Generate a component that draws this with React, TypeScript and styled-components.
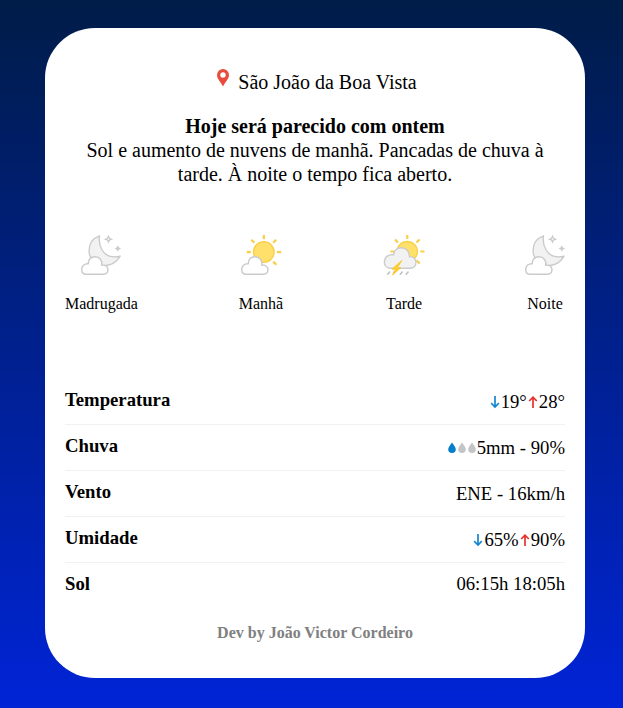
import React from 'react';
import styled, { createGlobalStyle } from 'styled-components';

const GlobalStyle = createGlobalStyle`
  * { box-sizing: border-box; margin: 0; padding: 0; }
  body {
    font-family: "Liberation Serif", "Times New Roman", serif;
    color: #000;
  }
`;

const Page = styled.div`
  height: 708px;
  padding: 28px 0 0 45px;
  background: linear-gradient(#001c48, #0024d6);
`;

const Card = styled.main`
  display: flex;
  flex-direction: column;
  width: 540px;
  height: 650px;
  padding: 40px 20px 0;
  border-radius: 50px;
  background: #fff;
`;

const City = styled.div`
  display: flex;
  justify-content: center;
  height: 28px;
  padding-left: 4px;
  font-size: 20px;
  line-height: 28px;

  svg { margin: 1px 9px 0 0; }
`;

const Summary = styled.section`
  width: 480px;
  height: 72px;
  margin: 18px auto 0;
  font-size: 20px;
  line-height: 24px;
  text-align: center;
`;

const SummaryTitle = styled.h1`
  font-size: 20px;
  line-height: 24px;
`;

const Periods = styled.div`
  display: flex;
  justify-content: space-between;
  height: 81px;
  margin-top: 49px;
`;

const Period = styled.div`
  display: flex;
  flex-direction: column;
  align-items: center;
  font-size: 16px;
  line-height: 18px;

  svg { display: block; margin-bottom: 18px; overflow: visible; }
`;

const Details = styled.dl`
  margin-top: 63px;
`;

const Row = styled.div`
  display: flex;
  justify-content: space-between;
  height: 46px;
  font-size: 18.72px;
  line-height: 22px;
  border-bottom: 1px solid #f1f1f1;

  &:last-child { border-color: transparent; }
`;

const Label = styled.dt`
  padding-top: 10px;
  font-weight: bold;
`;

const Value = styled.dd<{ $top: number }>`
  display: flex;
  padding-top: ${({ $top }) => $top}px;

  svg { display: block; margin-top: 4px; }
`;

const Credit = styled.footer`
  margin-top: 15px;
  font-size: 16px;
  font-weight: bold;
  line-height: 18px;
  text-align: center;
  color: #808080;
`;

const Pin = () => (
  <svg width="12" height="18" viewBox="0 0 12 18">
    <path fill="#e74c3c" fillRule="evenodd" d="M6 0a6 6 0 0 0-6 6c0 4.2 4.1 7 6 11.6C7.900 13 12 10.200 12 6a6 6 0 0 0-6-6zm0 3.300a2.700 2.700 0 1 1 0 5.400 2.700 2.700 0 0 1 0-5.400z" />
  </svg>
);

const SmallCloud = () => (
  <path
    d="M5.200 39.300H22.600A4.700 4.700 0 0 0 27 34.800C27 31.600 24 29.400 20.800 30.400C21.600 25.500 18.500 21.800 14 21.800C9.700 21.800 7 24.900 7.300 28.700C3.200 28.400 .7 31 .7 34.500C.7 37.300 2.500 39.300 5.200 39.300z"
    fill="#fff" stroke="#cbcbcb" strokeWidth="1.400" strokeLinejoin="round"
  />
);

const Night = () => (
  <svg width="40" height="42" viewBox="0 0 40 42">
    <path d="M18.500 .8C11 3.500 7.800 9.500 8.100 16.500c.5 8.500 6.700 14.200 14.500 14.200 7.500 0 13.200-3.900 16.500-9.500-7.500 1.700-14.400-.2-18-6.200C18.400 10.300 17.700 5.500 18.500 .8z" fill="#f2f2f2" stroke="#cbcbcb" strokeWidth="1.400" strokeLinejoin="round" />
    <path d="M27.500 1.200l.9 2.100 2.100.9-2.100.9-.9 2.100-.9-2.100-2.100-.9 2.100-.9zM36.800 11.700l.6 1.200 1.200.6-1.200.6-.6 1.200-.6-1.200-1.200-.6 1.200-.6z" fill="#fff" stroke="#cbcbcb" strokeWidth="1.300" />
    <SmallCloud />
  </svg>
);

const Sun = () => (
  <>
    <circle cx="22.800" cy="17" r="10.300" fill="#ffe06a" stroke="#f8cf45" strokeWidth="1.300" />
    <path d="M22.800 0v4.200M10.400 4.700l3 3M35.200 4.700l-3 3M5.800 17.200h4M36 17.200h4.200M32.200 26.600l3.200 3.200" fill="none" stroke="#f8cf45" strokeWidth="2.200" />
  </>
);

const Morning = () => (
  <svg width="40" height="42" viewBox="0 0 40 42">
    <Sun />
    <SmallCloud />
  </svg>
);

const Storm = () => (
  <svg width="40" height="42" viewBox="0 0 40 42">
    <g transform="translate(.7 0) scale(.99 .96)"><Sun /></g>
    <path d="M7 33.200h19c4 0 6-2.700 6-5.800 0-3.600-2.900-6-6.600-5.700C25.400 16.100 21.800 12.700 17.200 12.700c-4.700 0-7.400 3.400-7.700 7.200C4.200 19.200.3 22.200.3 26.900c0 3.700 2.700 6.300 6.700 6.300z" fill="#f2f2f2" stroke="#cbcbcb" strokeWidth="1.400" />
    <path d="M6 36.500l-2.700 3.200M10.500 36.500l-1.200 1.300M18.600 36.500l-2.700 3.200M24.500 36.500l-2.700 3.200" stroke="#c2c2c2" strokeWidth="1.600" />
    <path d="M17.800 25.500L8 34.200h3.800L8.500 40l8.200-7.200h-3.400z" fill="#ffd02c" stroke="#f9c836" strokeWidth="1" />
  </svg>
);

const Arrow = ({ up = false }: { up?: boolean }) => (
  <svg width="12" height="14" viewBox="0 0 12 14" fill="none" stroke={up ? '#e5322d' : '#1686cf'} strokeWidth="1.700">
    {up ? <path d="M6 13V2.200M2.200 6L6 2.200 9.800 6" /> : <path d="M6 1v11M2.200 8.200L6 12l3.800-3.800" />}
  </svg>
);

const Drop = ({ filled = false }: { filled?: boolean }) => (
  <svg width="10" height="14" viewBox="0 0 10 14">
    <path fill={filled ? '#057ecb' : '#c2c4c6'} d="M5 1.500C3.500 4 1.200 6.200 1.200 8.300a3.800 3.800 0 0 0 7.600 0C8.800 6.200 6.500 4 5 1.500z" />
  </svg>
);

const periods = [
  { name: 'Madrugada', Icon: Night },
  { name: 'Manhã', Icon: Morning },
  { name: 'Tarde', Icon: Storm },
  { name: 'Noite', Icon: Night },
];

const details = [
  { label: 'Temperatura', top: 12, value: <><Arrow />19°<Arrow up />28°</> },
  { label: 'Chuva', top: 12, value: <><Drop filled /><Drop /><Drop />5mm - 90%</> },
  { label: 'Vento', top: 12, value: 'ENE - 16km/h' },
  { label: 'Umidade', top: 12, value: <><Arrow />65%<Arrow up />90%</> },
  { label: 'Sol', top: 10, value: '06:15h 18:05h' },
];

export default function App() {
  return (
    <>
      <GlobalStyle />
      <Page>
        <Card>
          <City><Pin />São João da Boa Vista</City>
          <Summary>
            <SummaryTitle>Hoje será parecido com ontem</SummaryTitle>
            <p>Sol e aumento de nuvens de manhã. Pancadas de chuva à tarde. À noite o tempo fica aberto.</p>
          </Summary>
          <Periods>
            {periods.map(({ name, Icon }) => (
              <Period key={name}><Icon />{name}</Period>
            ))}
          </Periods>
          <Details>
            {details.map(({ label, top, value }) => (
              <Row key={label}>
                <Label>{label}</Label>
                <Value $top={top}>{value}</Value>
              </Row>
            ))}
          </Details>
          <Credit>Dev by João Victor Cordeiro</Credit>
        </Card>
      </Page>
    </>
  );
}
